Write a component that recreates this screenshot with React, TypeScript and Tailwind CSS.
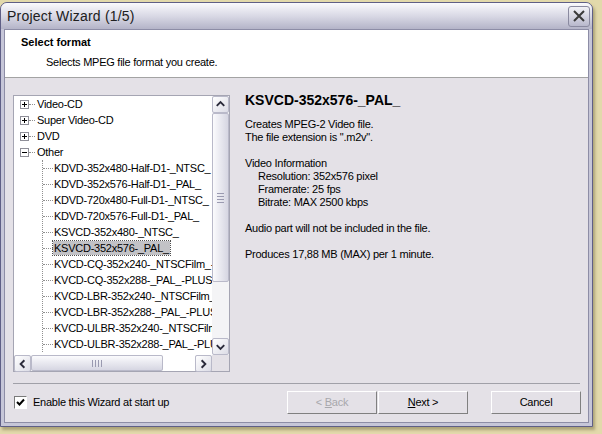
import React from 'react';

const font = { fontFamily: '"Liberation Sans", Arial, sans-serif' };

const roots = ['Video-CD', 'Super Video-CD', 'DVD'];
const children = [
  'KDVD-352x480-Half-D1-_NTSC_',
  'KDVD-352x576-Half-D1-_PAL_',
  'KDVD-720x480-Full-D1-_NTSC_',
  'KDVD-720x576-Full-D1-_PAL_',
  'KSVCD-352x480-_NTSC_',
  'KSVCD-352x576-_PAL_',
  'KVCD-CQ-352x240-_NTSCFilm_-PLUS',
  'KVCD-CQ-352x288-_PAL_-PLUS',
  'KVCD-LBR-352x240-_NTSCFilm_',
  'KVCD-LBR-352x288-_PAL_-PLUS',
  'KVCD-ULBR-352x240-_NTSCFilm_',
  'KVCD-ULBR-352x288-_PAL_-PLUS',
];

const ExpandBox: React.FC<{ open?: boolean }> = ({ open }) => (
  <div className="relative w-[9px] h-[9px] border border-[#8f8f98] bg-white shrink-0">
    <div className="absolute left-[1px] top-[3px] w-[5px] h-px bg-black" />
    {!open && <div className="absolute left-[3px] top-[1px] w-px h-[5px] bg-black" />}
  </div>
);

const ScrollBtn: React.FC<{ dir: 'up' | 'down' | 'left' | 'right' }> = ({ dir }) => {
  const paths: Record<string, string> = {
    up: 'M4 9 L8 5 L12 9',
    down: 'M4 6 L8 10 L12 6',
    left: 'M10 4 L6 8 L10 12',
    right: 'M6 4 L10 8 L6 12',
  };
  return (
    <div className="w-[17px] h-[17px] shrink-0 rounded-[2px] border border-[#b9b9c9] bg-gradient-to-br from-white to-[#dcdce6] flex items-center justify-center">
      <svg width="16" height="16" viewBox="0 0 16 16">
        <path d={paths[dir]} fill="none" stroke="#2a2a3a" strokeWidth="2" />
      </svg>
    </div>
  );
};

const App: React.FC = () => {
  return (
    <div className="w-[602px] h-[434px] bg-[#e2d9ab] pt-[2px] overflow-hidden" style={font}>
      <div className="w-[593px] h-[425px] rounded-t-[7px] border border-[#5f5f86] bg-[#c6c6d8] flex flex-col shadow-[2px_3px_3px_rgba(120,110,70,0.5)]">
        {/* Title bar */}
        <div className="h-[26px] rounded-t-[6px] bg-gradient-to-b from-[#fafafd] via-[#d9d9e5] to-[#b4b4c8] flex items-center justify-between pl-[6px] pr-[2px]">
          <span className="text-[14px] text-[#202020] tracking-[0.2px]">Project Wizard (1/5)</span>
          <div className="w-[22px] h-[21px] rounded-[3px] border border-[#8a8aa0] bg-gradient-to-b from-[#f2f2f7] to-[#b8b8cc] flex items-center justify-center">
            <svg width="14" height="14" viewBox="0 0 14 14">
              <path d="M2 2 L12 12 M12 2 L2 12" stroke="#3a3a3a" strokeWidth="2" />
            </svg>
          </div>
        </div>

        {/* Client area */}
        <div className="flex-1 mx-[3px] mb-[3px] border border-[#8d8da6] bg-[#e4e1e7] flex flex-col tracking-[-0.25px]">
          {/* Header */}
          <div className="h-[48px] bg-white border-b border-[#a3a3a3] pl-[16px] pt-[5px] text-[11px] text-black">
            <div className="font-bold leading-[14px] tracking-normal">Select format</div>
            <div className="pl-[25px] pt-[6px] leading-[14px]">Selects MPEG file format you create.</div>
          </div>

          {/* Body */}
          <div className="flex-1 flex pl-[8px] pt-[17px]">
            {/* Tree */}
            <div className="w-[217px] h-[277px] border border-[#a5a5b3] bg-white grid grid-cols-[198px_17px] grid-rows-[259px_16px] shrink-0">
              <div className="overflow-hidden text-[11px] text-black">
                {roots.map((r) => (
                  <div key={r} className="h-4 flex items-center pl-[6px]">
                    <ExpandBox />
                    <div className="w-[6px] border-t border-dotted border-[#909090]" />
                    <span className="pl-[2px] whitespace-nowrap">{r}</span>
                  </div>
                ))}
                <div className="h-4 flex items-center pl-[6px]">
                  <ExpandBox open />
                  <div className="w-[6px] border-t border-dotted border-[#909090]" />
                  <span className="pl-[2px]">Other</span>
                </div>
                <div className="ml-[28px] border-l border-dotted border-[#909090]">
                  {children.map((c) => {
                    const sel = c === 'KSVCD-352x576-_PAL_';
                    return (
                      <div key={c} className="h-4 flex items-center">
                        <div className="w-[10px] border-t border-dotted border-[#909090] shrink-0" />
                        <span
                          className={`whitespace-nowrap px-[1px] leading-[14px] ${
                            sel ? 'bg-[#c2c2c6] outline outline-1 outline-dotted outline-[#505050]' : ''
                          }`}
                        >
                          {c}
                        </span>
                      </div>
                    );
                  })}
                </div>
              </div>

              {/* Vertical scrollbar */}
              <div className="flex flex-col bg-[#f4f4f6]">
                <ScrollBtn dir="up" />
                <div className="h-[169px] rounded-[2px] border border-[#b9b9c9] bg-gradient-to-r from-[#fbfbfd] to-[#d6d6e2] flex flex-col items-center justify-center gap-[2px]">
                  <div className="w-[7px] h-px bg-[#9a9ab0]" />
                  <div className="w-[7px] h-px bg-[#9a9ab0]" />
                  <div className="w-[7px] h-px bg-[#9a9ab0]" />
                  <div className="w-[7px] h-px bg-[#9a9ab0]" />
                </div>
                <div className="flex-1" />
                <ScrollBtn dir="down" />
              </div>

              {/* Horizontal scrollbar */}
              <div className="flex bg-[#f4f4f6]">
                <ScrollBtn dir="left" />
                <div className="w-[132px] rounded-[2px] border border-[#b9b9c9] bg-gradient-to-b from-[#fbfbfd] to-[#d6d6e2] flex items-center justify-center gap-[2px]">
                  <div className="w-px h-[7px] bg-[#9a9ab0]" />
                  <div className="w-px h-[7px] bg-[#9a9ab0]" />
                  <div className="w-px h-[7px] bg-[#9a9ab0]" />
                  <div className="w-px h-[7px] bg-[#9a9ab0]" />
                </div>
                <div className="flex-1 bg-white" />
                <ScrollBtn dir="right" />
              </div>
              <div className="bg-[#e4e1e7]" />
            </div>

            {/* Details */}
            <div className="pl-[15px] -mt-[2px] text-[11px] leading-[13px] text-black">
              <div className="text-[14px] font-bold leading-[14px] pb-[11px] tracking-normal">KSVCD-352x576-_PAL_</div>
              <div>Creates MPEG-2 Video file.</div>
              <div>The file extension is ".m2v".</div>
              <div className="h-[13px]" />
              <div>Video Information</div>
              <div className="pl-[13px]">Resolution: 352x576 pixel</div>
              <div className="pl-[13px]">Framerate: 25 fps</div>
              <div className="pl-[13px]">Bitrate: MAX 2500 kbps</div>
              <div className="h-[13px]" />
              <div>Audio part will not be included in the file.</div>
              <div className="h-[13px]" />
              <div>Produces 17,88 MB (MAX) per 1 minute.</div>
            </div>
          </div>

          {/* Footer */}
          <div className="mx-[8px] border-t border-[#a0a0a8]" />
          <div className="h-[38px] flex items-center pl-[9px] pr-[7px] pt-[1px] pb-[2px] text-[11px] text-black">
            <div className="w-[13px] h-[13px] border border-[#7a7a7a] border-r-white border-b-white bg-white flex items-center justify-center">
              <svg width="9" height="9" viewBox="0 0 9 9">
                <path d="M1 4 L3.5 6.5 L8 1.5" fill="none" stroke="#000" strokeWidth="2" />
              </svg>
            </div>
            <span className="pl-[6px]">Enable this Wizard at start up</span>
            <div className="flex-1" />
            <button className="w-[90px] h-[23px] border border-t-white border-l-white border-r-[#808080] border-b-[#808080] bg-[#e4e1e7] text-[#a8a8ac]">
              &lt; <span className="underline">B</span>ack
            </button>
            <button className="w-[90px] h-[23px] ml-px border border-t-white border-l-white border-r-[#808080] border-b-[#808080] bg-[#e4e1e7]">
              <span className="underline">N</span>ext &gt;
            </button>
            <button className="w-[90px] h-[23px] ml-[23px] border border-t-white border-l-white border-r-[#808080] border-b-[#808080] bg-[#e4e1e7]">
              Cancel
            </button>
          </div>
        </div>
      </div>
    </div>
  );
};

export default App;
